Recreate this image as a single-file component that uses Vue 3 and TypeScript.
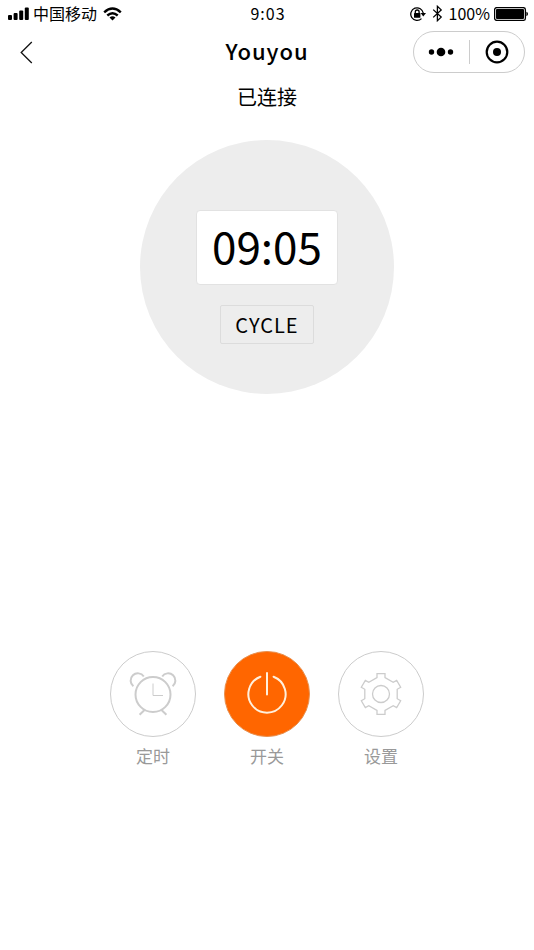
<script setup lang="ts">
import { ref } from 'vue'

const power = ref<boolean>(true)
const time = ref<string>('09:05')

// Outline of a six-toothed gear centred on the origin.
const tooth: [number, number][] = [[-4, -16.4], [-4, -20.4], [4, -20.4], [4, -16.4]]
const gear: string = Array.from({ length: 6 }, (_, i) => {
  const a = (i * Math.PI) / 3
  return tooth
    .map(([x, y]) => {
      const px = x * Math.cos(a) - y * Math.sin(a)
      const py = x * Math.sin(a) + y * Math.cos(a)
      return `${px.toFixed(2)},${py.toFixed(2)}`
    })
    .join(' ')
}).join(' ')
</script>

<template>
  <div class="screen">
    <div class="status">
      <div class="side">
        <svg class="signal" width="21" height="14" viewBox="0 0 21 14" aria-hidden="true">
          <rect x="0" y="8" width="4" height="5" rx="1" />
          <rect x="5.6" y="6" width="4" height="7" rx="1" />
          <rect x="11.2" y="3.5" width="4" height="9.5" rx="1" />
          <rect x="16.8" y="0.5" width="4" height="12.5" rx="1" />
        </svg>
        <span>中国移动</span>
        <svg class="wifi" width="19" height="14" viewBox="0 0 19 14" aria-hidden="true">
          <path d="M1.2 5.3Q9.5 -2.3 17.8 5.3" />
          <path d="M4.3 8.5Q9.5 3.8 14.7 8.5" />
          <path class="solid" d="M6.5 10.5Q9.5 8 12.5 10.5L9.5 13.6Z" />
        </svg>
      </div>
      <span class="clock">9:03</span>
      <div class="side right">
        <svg width="16" height="16" viewBox="0 0 16 16" aria-hidden="true">
          <path class="line" d="M11.5 12.6A6.3 6.3 0 1 1 13.3 7.2" />
          <path d="M10.6 7H16L13.3 10.4Z" />
          <rect x="4" y="7" width="6.4" height="4.8" rx="0.6" />
          <path class="line" d="M5.3 7.2V5.9a1.9 1.9 0 0 1 3.8 0V7.2" />
        </svg>
        <svg class="bluetooth" width="11" height="17" viewBox="0 0 11 17" aria-hidden="true">
          <path class="line" d="M1.2 4.6L9.2 12.1L5.4 15.7V1.3L9.2 4.9L1.2 12.4" />
        </svg>
        <span>100%</span>
        <svg class="battery" width="34" height="14" viewBox="0 0 34 14" aria-hidden="true">
          <rect class="line" x="0.6" y="0.6" width="30.8" height="12.8" rx="2.2" />
          <rect x="2" y="2" width="28" height="10" rx="1" />
          <path d="M32.4 4.8Q34 5.4 34 7T32.4 9.2Z" />
        </svg>
      </div>
    </div>

    <header class="nav">
      <div class="side">
        <button class="back" type="button" aria-label="返回">
          <svg width="13" height="23" viewBox="0 0 13 23" aria-hidden="true">
            <path d="M11.8 1L1.2 11.5L11.8 22" />
          </svg>
        </button>
      </div>
      <h1>Youyou</h1>
      <div class="side right">
        <div class="capsule">
          <button type="button" aria-label="更多">
            <svg width="26" height="10" viewBox="0 0 26 10" aria-hidden="true">
              <circle cx="3.5" cy="5" r="2.7" />
              <circle cx="13" cy="5" r="4.3" />
              <circle cx="22.5" cy="5" r="2.7" />
            </svg>
          </button>
          <button type="button" aria-label="关闭">
            <svg width="24" height="24" viewBox="0 0 24 24" aria-hidden="true">
              <circle class="ring" cx="12" cy="12" r="10.3" />
              <circle cx="12" cy="12" r="4" />
            </svg>
          </button>
        </div>
      </div>
    </header>

    <main>
      <p class="state">已连接</p>
      <section class="dial">
        <time class="time">{{ time }}</time>
        <button class="cycle" type="button">CYCLE</button>
      </section>
      <div class="actions">
        <button class="action" type="button">
          <span class="disc">
            <svg width="48" height="48" viewBox="-24 -24 48 48" aria-hidden="true">
              <g class="clockface">
                <circle cx="0" cy="0.5" r="17.5" />
                <path d="M-19.6 -7.8A7.2 7.2 0 1 1 -9.2 -17.5" />
                <path d="M19.6 -7.8A7.2 7.2 0 1 0 9.2 -17.5" />
                <path d="M-8.2 15.7L-13.4 20.8M8.2 15.7L13.4 20.8" />
              </g>
              <path class="hands" d="M0 -10.5V1.5H10" />
            </svg>
          </span>
          <span>定时</span>
        </button>
        <button class="action" type="button" :aria-pressed="power" @click="power = !power">
          <span class="disc" :class="{ on: power }">
            <svg width="48" height="48" viewBox="-24 -24 48 48" aria-hidden="true">
              <path class="power" d="M-6.6 -17.3A18.6 18.6 0 1 0 6.6 -17.3M0 -21V0.5" />
            </svg>
          </span>
          <span>开关</span>
        </button>
        <button class="action" type="button">
          <span class="disc">
            <svg width="48" height="48" viewBox="-24 -24 48 48" aria-hidden="true">
              <g class="gear">
                <polygon :points="gear" />
                <circle r="8.5" />
              </g>
            </svg>
          </span>
          <span>设置</span>
        </button>
      </div>
    </main>
  </div>
</template>

<style>
body {
  background: #fff;
}
</style>

<style scoped>
.screen {
  min-height: 100vh;
  color: #000;
  font-family: "Noto Sans CJK SC", sans-serif;
}
button {
  padding: 0;
  border: 0;
  background: none;
  color: inherit;
  font: inherit;
  cursor: pointer;
}
svg {
  display: block;
  flex: none;
}
.status,
.nav {
  display: flex;
  align-items: center;
}
.side {
  display: flex;
  flex: 1;
  align-items: center;
}
.right {
  justify-content: flex-end;
}
.status {
  height: 27px;
  padding: 0 6px 0 8px;
  font-size: 16px;
  line-height: 27px;
}
.signal {
  margin-right: 4px;
}
.wifi {
  margin-left: 6px;
}
.wifi path {
  fill: none;
  stroke: #000;
  stroke-width: 2.4;
}
.wifi .solid {
  fill: #000;
  stroke: none;
}
.clock {
  letter-spacing: 1px;
}
.line {
  fill: none;
  stroke: #000;
  stroke-width: 1.3;
}
.bluetooth {
  margin: 0 6px;
}
.battery {
  margin-left: 4px;
}
.nav {
  height: 50px;
  padding: 0 9px;
}
.back {
  padding: 0 11px;
}
.back path {
  fill: none;
  stroke: #111;
  stroke-width: 1.3;
}
h1 {
  margin: 0;
  padding-bottom: 4px;
  font-size: 22px;
  font-weight: 500;
  line-height: 32px;
  letter-spacing: 1px;
}
.capsule {
  display: flex;
  align-items: center;
  box-sizing: border-box;
  width: 112px;
  height: 42px;
  border: 1px solid #ccc;
  border-radius: 21px;
}
.capsule button {
  display: flex;
  flex: 1;
  align-items: center;
  justify-content: center;
  height: 24px;
}
.capsule button + button {
  border-left: 1px solid #ccc;
}
.ring {
  fill: none;
  stroke: #000;
  stroke-width: 2.2;
}
main {
  display: flex;
  flex-direction: column;
  align-items: center;
}
.state {
  margin: 6px 0 0;
  font-size: 20px;
  line-height: 28px;
}
.dial {
  display: flex;
  flex-direction: column;
  align-items: center;
  justify-content: center;
  gap: 20px;
  box-sizing: border-box;
  width: 254px;
  aspect-ratio: 1;
  margin-top: 29px;
  padding-top: 20px;
  border-radius: 50%;
  background: #ededed;
}
.time {
  padding: 0 15px 4px;
  border: 1px solid #e2e2e2;
  border-radius: 4px;
  background: #fff;
  font-size: 44px;
  line-height: 69px;
}
.cycle {
  padding: 0 14px;
  border: 1px solid #dcdcdc;
  border-radius: 2px;
  font-size: 20px;
  line-height: 37px;
  letter-spacing: 1px;
}
.actions {
  display: flex;
  gap: 28px;
  margin-top: 257px;
}
.action {
  display: flex;
  flex-direction: column;
  align-items: center;
  gap: 6px;
  color: #999;
  font-size: 17px;
  line-height: 26px;
}
.disc {
  display: flex;
  align-items: center;
  justify-content: center;
  box-sizing: border-box;
  width: 86px;
  height: 86px;
  border: 1px solid #ccc;
  border-radius: 50%;
}
.disc.on {
  border-color: #e8904f;
  background: #ff6600;
}
.clockface,
.hands,
.power,
.gear {
  fill: none;
  stroke: #ccc;
}
.gear {
  stroke-width: 1.3;
}
.clockface {
  stroke-width: 2;
}
.power {
  stroke-width: 2;
  stroke-linecap: round;
}
.on .power {
  stroke: #fff0dc;
}
</style>
